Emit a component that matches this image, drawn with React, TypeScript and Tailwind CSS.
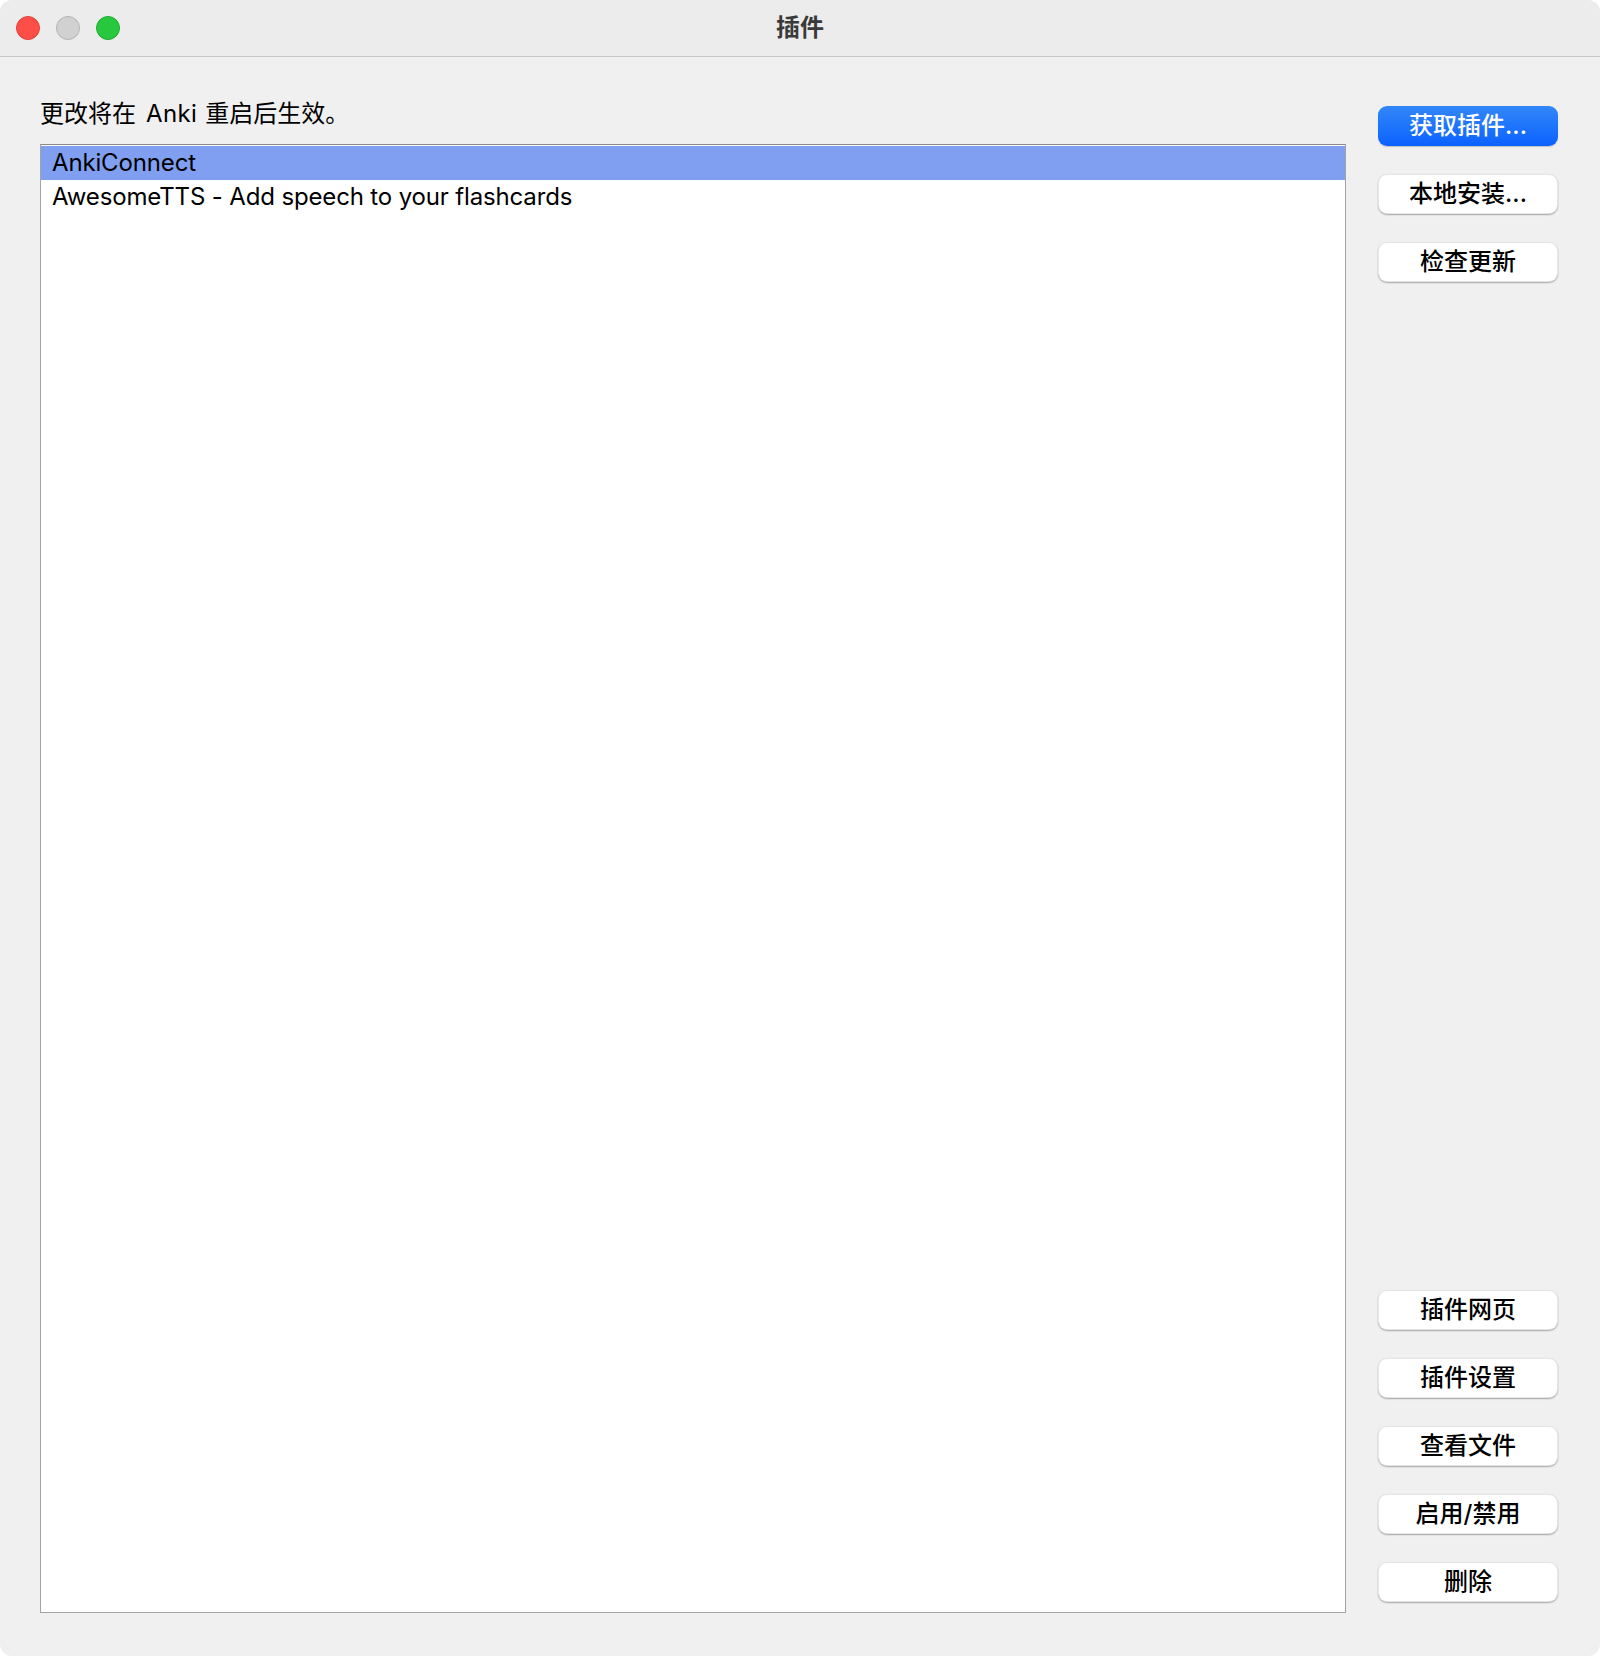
import React from "react";

const font = { fontFamily: '"Inter", "Noto Sans CJK SC", sans-serif' };

const addons = ["AnkiConnect", "AwesomeTTS - Add speech to your flashcards"];

function Light({ fill, ring }: { fill: string; ring: string }) {
  return <span className={`h-[24px] w-[24px] rounded-full border ${fill} ${ring}`} />;
}

function SideButton({ label, primary }: { label: string; primary?: boolean }) {
  if (primary) {
    return (
      <button className="h-[40px] w-[180px] rounded-[9px] bg-gradient-to-b from-[#3287f8] to-[#0b61ff] text-[24px] font-medium leading-none text-white shadow-[0_1px_1px_rgba(0,0,0,0.2)]">
        {label}
      </button>
    );
  }
  return (
    <button className="h-[40px] w-[180px] rounded-[9px] border border-black/10 bg-white text-[24px] font-medium leading-none text-black shadow-[0_1px_1.5px_rgba(0,0,0,0.3)]">
      {label}
    </button>
  );
}

export default function App() {
  return (
    <div className="h-[1656px] w-[1600px] bg-white" style={font}>
      <div className="flex h-full w-full flex-col overflow-hidden rounded-[12px] bg-[#f0f0f0]">
        {/* title bar */}
        <div className="relative flex h-[57px] shrink-0 items-center justify-center border-b border-[#c9c9c9] bg-[#ececec]">
          <div className="absolute left-[16px] top-[16px] flex gap-[16px]">
            <Light fill="bg-[#fe4e48]" ring="border-[#e1423c]" />
            <Light fill="bg-[#d1d1d1]" ring="border-[#b4b4b4]" />
            <Light fill="bg-[#28c83e]" ring="border-[#1fab31]" />
          </div>
          <span className="text-[24px] font-bold text-[#3a3a3a]">插件</span>
        </div>

        <div className="flex min-h-0 flex-1">
          {/* addon list */}
          <div className="flex min-w-0 flex-1 flex-col pb-[43px] pl-[40px] pt-[40px]">
            <div className="mb-[13px] h-[34px] text-[24px] leading-[34px] text-black">
              更改将在<span className="ml-[10px] mr-[8px] tracking-[0.4px]">Anki</span>重启后生效。
            </div>
            <div className="flex-1 border border-[#a3a3a3] border-t-[#8a8a8a] bg-white pt-[1px]">
              {addons.map((name, i) => (
                <div
                  key={name}
                  className={`h-[34px] pl-[11px] text-[24px] leading-[34px] tracking-[-0.15px] text-black ${
                    i === 0 ? "bg-[#809ff0]" : ""
                  }`}
                >
                  {name}
                </div>
              ))}
            </div>
          </div>

          {/* actions */}
          <div className="ml-[32px] mr-[42px] flex flex-col justify-between pb-[54px] pt-[49px]">
            <div className="flex flex-col gap-[28px]">
              <SideButton label="获取插件..." primary />
              <SideButton label="本地安装..." />
              <SideButton label="检查更新" />
            </div>
            <div className="flex flex-col gap-[28px]">
              <SideButton label="插件网页" />
              <SideButton label="插件设置" />
              <SideButton label="查看文件" />
              <SideButton label="启用/禁用" />
              <SideButton label="删除" />
            </div>
          </div>
        </div>
      </div>
    </div>
  );
}
